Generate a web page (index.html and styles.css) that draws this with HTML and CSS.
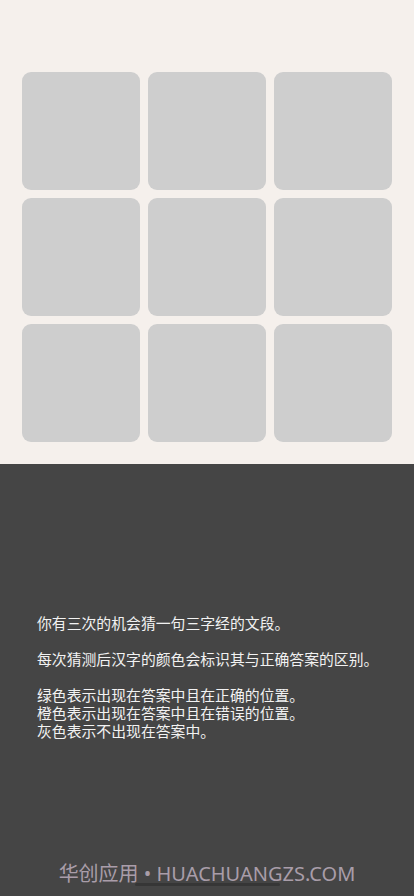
FILE: index.html
```html
<!DOCTYPE html>
<html>
<head>
  <meta charset="utf-8">
  <title>三字经猜谜</title>
  <link rel="stylesheet" href="styles.css">
</head>
<body>
  <div class="board">
    <div class="grid">
      <div class="cell"></div>
      <div class="cell"></div>
      <div class="cell"></div>
      <div class="cell"></div>
      <div class="cell"></div>
      <div class="cell"></div>
      <div class="cell"></div>
      <div class="cell"></div>
      <div class="cell"></div>
    </div>
  </div>

  <div class="help">
    <p class="rules">
      你有三次的机会猜一句三字经的文段。<br>
      <br>
      每次猜测后汉字的颜色会标识其与正确答案的区别。<br>
      <br>
      绿色表示出现在答案中且在正确的位置。<br>
      橙色表示出现在答案中且在错误的位置。<br>
      灰色表示不出现在答案中。
    </p>
  </div>

  <div class="watermark">华创应用 • HUACHUANGZS.COM</div>
  <div class="home-bar"></div>
</body>
</html>
```

FILE: styles.css
```css
html, body {
  margin: 0;
  height: 100%;
}

body {
  font-family: "Noto Sans CJK SC", "Noto Sans", sans-serif;
  background-color: #454545;
  display: flex;
  flex-direction: column;
  position: relative;
}

.board {
  background-color: #f5f0ec;
  padding: 72px 22px 22px 22px;
}

.grid {
  display: grid;
  grid-template-columns: repeat(3, 118px);
  grid-auto-rows: 118px;
  gap: 8px;
}

.cell {
  background-color: #cecece;
  border-radius: 9px;
}

.help {
  flex: 1;
  display: flex;
  align-items: center;
  padding: 0 0 6px 37px;
}

.rules {
  margin: 0;
  color: #f2f2f2;
  font-size: 14.85px;
  line-height: 18px;
  white-space: nowrap;
}

.watermark {
  position: absolute;
  left: 0;
  right: 0;
  bottom: 9px;
  text-align: center;
  color: #a99da9;
  font-family: "Noto Sans", "Noto Sans CJK SC", sans-serif;
  font-size: 20px;
  line-height: 26px;
}

.home-bar {
  position: absolute;
  left: 135px;
  width: 145px;
  bottom: 10px;
  height: 3px;
  border-radius: 2px;
  background-color: #363636;
}
```
